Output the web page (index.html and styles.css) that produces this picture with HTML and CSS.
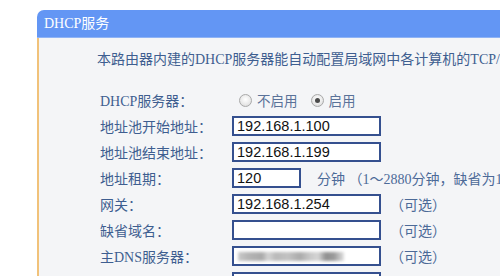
FILE: index.html
```html
<!DOCTYPE html>
<html lang="zh-CN">
<head>
<meta charset="utf-8">
<title>DHCP服务</title>
<link rel="stylesheet" href="styles.css">
</head>
<body>
<div class="panel">
  <div class="panel-head">DHCP服务</div>
  <div class="panel-body">
    <p class="intro">本路由器内建的DHCP服务器能自动配置局域网中各计算机的TCP/IP协议。</p>
    <div class="form">
      <div class="label">DHCP服务器：</div>
      <div class="field radios">
        <span class="radio"></span><span class="radio-text">不启用</span>
        <span class="radio checked"></span><span class="radio-text">启用</span>
      </div>

      <div class="label">地址池开始地址：</div>
      <div class="field"><span class="input">192.168.1.100</span></div>

      <div class="label">地址池结束地址：</div>
      <div class="field"><span class="input">192.168.1.199</span></div>

      <div class="label">地址租期：</div>
      <div class="field"><span class="input short">120</span><span class="note wide">分钟 （1～2880分钟，缺省为120分钟）</span></div>

      <div class="label">网关：</div>
      <div class="field"><span class="input">192.168.1.254</span><span class="note">（可选）</span></div>

      <div class="label">缺省域名：</div>
      <div class="field"><span class="input"></span><span class="note">（可选）</span></div>

      <div class="label">主DNS服务器：</div>
      <div class="field"><span class="input"><span class="blur"></span></span><span class="note">（可选）</span></div>

      <div class="label">备用DNS服务器：</div>
      <div class="field"><span class="input"></span><span class="note">（可选）</span></div>
    </div>
  </div>
</div>
</body>
</html>
```
FILE: styles.css
```css
html, body {
  margin: 0;
  padding: 0;
  background: #ffffff;
  overflow: hidden;
  height: 276px;
}
body {
  font-family: "Liberation Serif", "Noto Sans CJK SC", serif;
  font-size: 14px;
}
.panel {
  margin: 10px 0 0 37px;
}
.panel-head {
  height: 27px;
  line-height: 27px;
  background: #6396f4;
  color: #ffffff;
  padding-left: 7px;
  border-top-left-radius: 7px;
  border-bottom: 1px solid #8fb3f5;
  font-size: 14px;
}
.panel-body {
  background: #f4f5f7;
  border-left: 2px solid #f1c27a;
  height: 300px;
  padding-top: 12px;
}
.intro {
  margin: 0;
  padding-left: 58px;
  white-space: nowrap;
  overflow: hidden;
  line-height: 20px;
  color: #3e5e90;
}
.form {
  margin-top: 17px;
  padding-left: 61px;
  display: grid;
  grid-template-columns: 132px 1fr;
  grid-auto-rows: 26px;
  color: #3e5e90;
}
.label {
  display: flex;
  align-items: center;
  white-space: nowrap;
}
.field {
  display: flex;
  align-items: center;
  white-space: nowrap;
  overflow: hidden;
}
.radios {
  padding-left: 7px;
}
.radio {
  width: 11px;
  height: 11px;
  border-radius: 50%;
  border: 1px solid #a9a9a9;
  background: radial-gradient(circle at 50% 40%, #ffffff 0%, #e8e8e8 60%, #cfcfcf 100%);
  position: relative;
  flex: none;
}
.radio.checked::after {
  content: "";
  position: absolute;
  left: 3px;
  top: 3px;
  width: 5px;
  height: 5px;
  border-radius: 50%;
  background: #4a4a4a;
}
.radio-text {
  margin-left: 5px;
  margin-right: 13px;
  font-family: "Noto Sans CJK SC", sans-serif;
  font-size: 13.5px;
  color: #5a7299;
}
.input {
  box-sizing: border-box;
  width: 149px;
  height: 20px;
  border: 2px solid #35508f;
  background: #ffffff;
  font-family: "Liberation Sans", Arial, sans-serif;
  font-size: 14.5px;
  line-height: 16px;
  color: #111111;
  padding-left: 3px;
  flex: none;
  position: relative;
  overflow: hidden;
}
.input.short {
  width: 69px;
}
.note {
  margin-left: 9px;
  color: #4c6a98;
}
.note.wide {
  margin-left: 16px;
}
.blur {
  position: absolute;
  left: 4px;
  top: 4px;
  width: 106px;
  height: 9px;
  background: linear-gradient(90deg,
    #c9c9c9 0, #b5b5b5 10px, #a9a9a9 24px, #d4d4d4 30px,
    #b9b9b9 38px, #c2c2c2 50px, #aaaaaa 62px, #c8c8c8 72px,
    #d6d6d6 80px, #8f8f8f 88px, #9a9a9a 96px, #e0e0e0 106px);
  filter: blur(1.5px);
}
```
